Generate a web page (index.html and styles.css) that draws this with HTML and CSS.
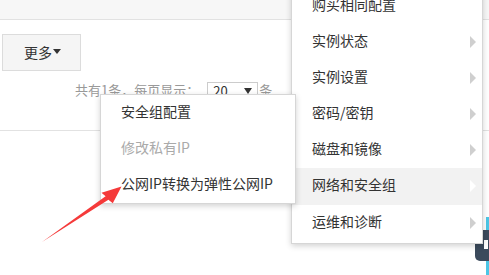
FILE: index.html
```html
<!DOCTYPE html>
<html lang="zh-CN">
  <head>
    <meta charset="UTF-8" />
    <title>实例列表 - 更多操作</title>
    <link rel="stylesheet" href="styles.css">
  </head>
  <body>
    <div class="topbar"></div>

    <div class="toolbar">
      <button class="more-button">更多<span class="caret"></span></button>
    </div>

    <div class="pager">
      <span class="pager-text">共有1条，每页显示：</span>
      <span class="page-size">20<span class="caret small"></span></span>
      <span class="pager-text">条</span>
    </div>

    <div class="table-head"></div>

    <!-- 更多 dropdown -->
    <ul class="menu">
      <li class="menu-item">购买相同配置</li>
      <li class="menu-item has-sub">实例状态</li>
      <li class="menu-item has-sub">实例设置</li>
      <li class="menu-item has-sub">密码/密钥</li>
      <li class="menu-item has-sub">磁盘和镜像</li>
      <li class="menu-item has-sub active">网络和安全组</li>
      <li class="menu-item has-sub">运维和诊断</li>
    </ul>

    <ul class="submenu">
      <li class="menu-item">安全组配置</li>
      <li class="menu-item disabled">修改私有IP</li>
      <li class="menu-item">公网IP转换为弹性公网IP</li>
    </ul>

    <!-- floating help widget -->
    <div class="side-strip"></div>
    <div class="side-tab"><span class="side-tab-icon"></span></div>

    <!-- annotation arrow -->
    <svg class="annotation" width="489" height="275" viewBox="0 0 489 275">
      <polygon
        points="42,242 105.6,196.2 101.5,192.8 121.5,186.5 112.8,203.2 108.4,199.8"
        fill="#f53a3a"
      />
    </svg>
  </body>
</html>
```

FILE: styles.css
```css
body {
  margin: 0;
  font-family: "Noto Sans CJK SC", "Noto Sans", sans-serif;
  color: #333;
  background-color: #ffffff;
  width: 489px;
  height: 275px;
  overflow: hidden;
  position: relative;
}

.topbar {
  height: 19px;
  background-color: #f7f7f7;
  border-bottom: 1px solid #e2e2e2;
}

.toolbar {
  padding: 14px 0 0 2px;
}

.more-button {
  display: flex;
  align-items: center;
  justify-content: center;
  width: 79px;
  height: 37px;
  padding: 0 0 2px 2px;
  background-color: #f5f5f5;
  border: 1px solid #dcdcdc;
  font-family: inherit;
  font-size: 14px;
  color: #333;
}

.caret {
  display: inline-block;
  width: 0;
  height: 0;
  margin-left: 1px;
  border-top: 5px solid #333;
  border-left: 4px solid transparent;
  border-right: 4px solid transparent;
}

.caret.small {
  margin-left: 16px;
  border-top-width: 6px;
}

.pager {
  display: flex;
  align-items: flex-start;
  margin-top: 10px;
  padding-left: 75px;
  font-size: 13px;
  line-height: 18px;
}

.pager-text {
  color: #999;
}

.page-size {
  display: flex;
  align-items: center;
  box-sizing: border-box;
  width: 51px;
  height: 24px;
  margin: 1px 1px 0 8px;
  padding: 0 0 6px 5px;
  border: 1px solid #ccc;
  font-size: 13px;
  color: #333;
}

.table-head {
  margin-top: 24px;
  border-top: 1px solid #e2e2e2;
}

/* dropdown menus */
.menu,
.submenu {
  list-style: none;
  margin: 0;
  background-color: #ffffff;
  border: 1px solid #d6d6d6;
  box-shadow: 0 2px 6px rgba(0, 0, 0, 0.18);
  font-size: 14px;
}

.menu {
  position: absolute;
  left: 291px;
  top: -13px;
  width: 190px;
  padding: 0 0 2px 0;
  z-index: 10;
}

.submenu {
  position: absolute;
  left: 100px;
  top: 94px;
  width: 194px;
  padding: 0;
  z-index: 20;
}

.menu-item {
  position: relative;
  height: 36px;
  line-height: 32px;
  padding-left: 20px;
  white-space: nowrap;
}

.menu-item.has-sub::after {
  content: "";
  position: absolute;
  right: 6px;
  top: 12px;
  border-left: 6px solid #cfcfcf;
  border-top: 6px solid transparent;
  border-bottom: 6px solid transparent;
}

.menu-item.active {
  background-color: #f2f2f2;
  height: 37px;
}

.menu-item.active::after {
  border-left-color: #ffffff;
}

.menu-item.disabled {
  color: #aaa;
}

/* floating widget on the right edge */
.side-strip {
  position: absolute;
  right: 0;
  top: 217px;
  width: 3px;
  height: 58px;
  background-color: #4cc6e6;
}

.side-tab {
  position: absolute;
  right: 0;
  top: 230px;
  width: 14px;
  height: 31px;
  background-color: #3b4a5c;
  border-radius: 5px 0 0 5px;
  z-index: 5;
}

.side-tab-icon {
  position: absolute;
  left: 9px;
  top: 10px;
  width: 4px;
  height: 9px;
  background-color: #ffffff;
}

.annotation {
  position: absolute;
  left: 0;
  top: 0;
  pointer-events: none;
  z-index: 30;
}
```
